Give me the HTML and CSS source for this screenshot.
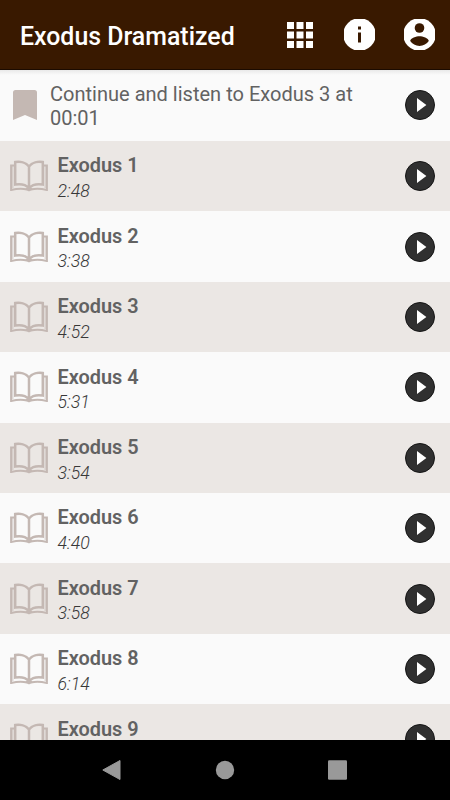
FILE: index.html
```
<!DOCTYPE html>
<html lang="en">
<head>
<meta charset="utf-8">
<title>Exodus Dramatized</title>
<link rel="stylesheet" href="styles.css">
</head>
<body>
<svg class="defs" aria-hidden="true">
  <symbol id="book" viewBox="0 0 38 32">
    <path d="M19 6.500C16 2.400 10 1.200 5.200 2.100v22.500c5-.8 10.800.3 13.800 3.500 3-3.200 8.800-4.300 13.800-3.500V2.100C28 1.200 22 2.400 19 6.500zM19 6.500v22" fill="none" stroke="currentColor" stroke-width="2.500"/>
    <path d="M5 5.500H1.100v24.400c5.900-1.200 11-1.500 15.900-.4h4c4.900-1.100 10-.8 15.900.4V5.500H33" fill="none" stroke="currentColor" stroke-width="2"/>
    <path d="M2.800 6v22M35.200 6v22" stroke="currentColor" stroke-width="1.400" opacity=".5"/>
    <path d="M19 26l4 3-4 2.500-4-2.500z" fill="currentColor"/>
  </symbol>
  <symbol id="play" viewBox="0 0 30 30">
    <circle cx="15" cy="15" r="14.500" fill="#303030" stroke="#151515"/>
    <path d="M12 8v14l9.400-7z" fill="#fff"/>
  </symbol>
</svg>
<div class="screen">
  <header class="bar">
    <h1 class="title">Exodus Dramatized</h1>
    <svg class="grid-icon" viewBox="0 0 26 26" fill="#fff"><path d="M0 0h7v7H0zM9.500 0h7v7h-7zM19 0h7v7h-7zM0 9.500h7v7H0zM9.500 9.500h7v7h-7zM19 9.500h7v7h-7zM0 19h7v7H0zM9.500 19h7v7h-7zM19 19h7v7h-7z"/></svg>
    <svg class="round-icon" viewBox="0.500 0.500 31 31"><circle cx="16" cy="16" r="16.300" fill="#fff"/><path d="M14.500 8h3v3h-3zM14.500 14h3v10h-3z" fill="#391900"/></svg>
    <svg class="round-icon" viewBox="0.500 0.500 31 31"><circle cx="16" cy="16" r="16.300" fill="#fff"/><circle cx="16" cy="9.500" r="4.800" fill="#391900"/><path d="M6.700 22.500c.2-3.100 6.200-4.800 9.300-4.800s9.100 1.700 9.300 4.800c-2 3-5.500 4.900-9.300 4.900s-7.300-1.900-9.300-4.900z" fill="#391900"/></svg>
  </header>
  <main class="list">
    <section class="resume">
      <svg class="bookmark" viewBox="0 0 24 30"><path d="M2.500 0h19A2.500 2.500 0 0 1 24 2.500V30l-12-5L0 30V2.500A2.500 2.500 0 0 1 2.500 0z" fill="#c4b8b3"/></svg>
      <p class="resume-text">Continue and listen to Exodus 3 at 00:01</p>
      <svg class="play"><use href="#play"/></svg>
    </section>
    <section class="row"><svg class="book"><use href="#book"/></svg><div class="info"><h2 class="name">Exodus 1</h2><p class="time">2:48</p></div><svg class="play"><use href="#play"/></svg></section>
    <section class="row"><svg class="book"><use href="#book"/></svg><div class="info"><h2 class="name">Exodus 2</h2><p class="time">3:38</p></div><svg class="play"><use href="#play"/></svg></section>
    <section class="row"><svg class="book"><use href="#book"/></svg><div class="info"><h2 class="name">Exodus 3</h2><p class="time">4:52</p></div><svg class="play"><use href="#play"/></svg></section>
    <section class="row"><svg class="book"><use href="#book"/></svg><div class="info"><h2 class="name">Exodus 4</h2><p class="time">5:31</p></div><svg class="play"><use href="#play"/></svg></section>
    <section class="row"><svg class="book"><use href="#book"/></svg><div class="info"><h2 class="name">Exodus 5</h2><p class="time">3:54</p></div><svg class="play"><use href="#play"/></svg></section>
    <section class="row"><svg class="book"><use href="#book"/></svg><div class="info"><h2 class="name">Exodus 6</h2><p class="time">4:40</p></div><svg class="play"><use href="#play"/></svg></section>
    <section class="row"><svg class="book"><use href="#book"/></svg><div class="info"><h2 class="name">Exodus 7</h2><p class="time">3:58</p></div><svg class="play"><use href="#play"/></svg></section>
    <section class="row"><svg class="book"><use href="#book"/></svg><div class="info"><h2 class="name">Exodus 8</h2><p class="time">6:14</p></div><svg class="play"><use href="#play"/></svg></section>
    <section class="row"><svg class="book"><use href="#book"/></svg><div class="info"><h2 class="name">Exodus 9</h2></div><svg class="play"><use href="#play"/></svg></section>
  </main>
  <nav class="nav">
    <svg class="nav-icon" viewBox="0 0 20 20"><path d="M18 .5v19L.8 10z" fill="#999" stroke="#999" stroke-linejoin="round"/></svg>
    <svg class="nav-icon" viewBox="0 0 20 20"><circle cx="10" cy="10" r="9.200" fill="#999"/></svg>
    <svg class="nav-icon" viewBox="0 0 20 20"><rect x="0" y=".3" width="19" height="19.400" rx="1.200" fill="#999"/></svg>
  </nav>
</div>
</body>
</html>
```
FILE: styles.css
```
* { box-sizing: border-box; margin: 0; padding: 0; }
body { font-family: Roboto, "Liberation Sans", sans-serif; background: #fafafa; color: #626262; }
svg { display: block; flex: none; }
.defs { display: none; }
.screen { width: 450px; height: 800px; display: flex; flex-direction: column; overflow: hidden; }
.bar { height: 70px; flex: none; display: flex; align-items: center; padding: 1px 15px 1px 20px; background: #391900; border-bottom: 1px solid #1c0b00; }
.title { flex: 1; padding-top: 4px; font-size: 24.900px; font-weight: 500; line-height: 30px; color: #fff; white-space: nowrap; }
.grid-icon { width: 26px; height: 26px; margin-right: 31px; }
.round-icon { width: 31px; height: 31px; }
.round-icon + .round-icon { margin-left: 29px; }
.list { flex: 1; min-height: 0; overflow: hidden; background: linear-gradient(#e9e9e9, #fafafa 5px); }
.resume { height: 71px; display: flex; align-items: center; padding: 0 15px 0 13px; }
.resume .play, .bookmark { margin-top: -1px; }
.bookmark { width: 24px; height: 30px; }
.resume-text { flex: 1; margin: 1px 20px 0 13px; font-size: 20.050px; line-height: 24px; }
.row { height: 70.400px; display: flex; align-items: center; padding: 0 15px 0 10px; background: #fafafa; }
.row:nth-child(even) { background: #ebe7e4; }
.book { width: 38px; height: 32px; color: #c4b8b3; }
.info { flex: 1; align-self: flex-start; padding: 12.400px 0 0 9.500px; }
.name { font-size: 19.900px; font-weight: 600; line-height: 25px; }
.time { padding-top: .6px; font-size: 17.700px; font-style: italic; font-weight: 300; line-height: 25px; color: #383838; }
.play { width: 30px; height: 30px; }
.nav { height: 60px; flex: none; display: flex; align-items: center; justify-content: center; gap: 93px; background: #000; }
.nav-icon { width: 20px; height: 20px; }
```
